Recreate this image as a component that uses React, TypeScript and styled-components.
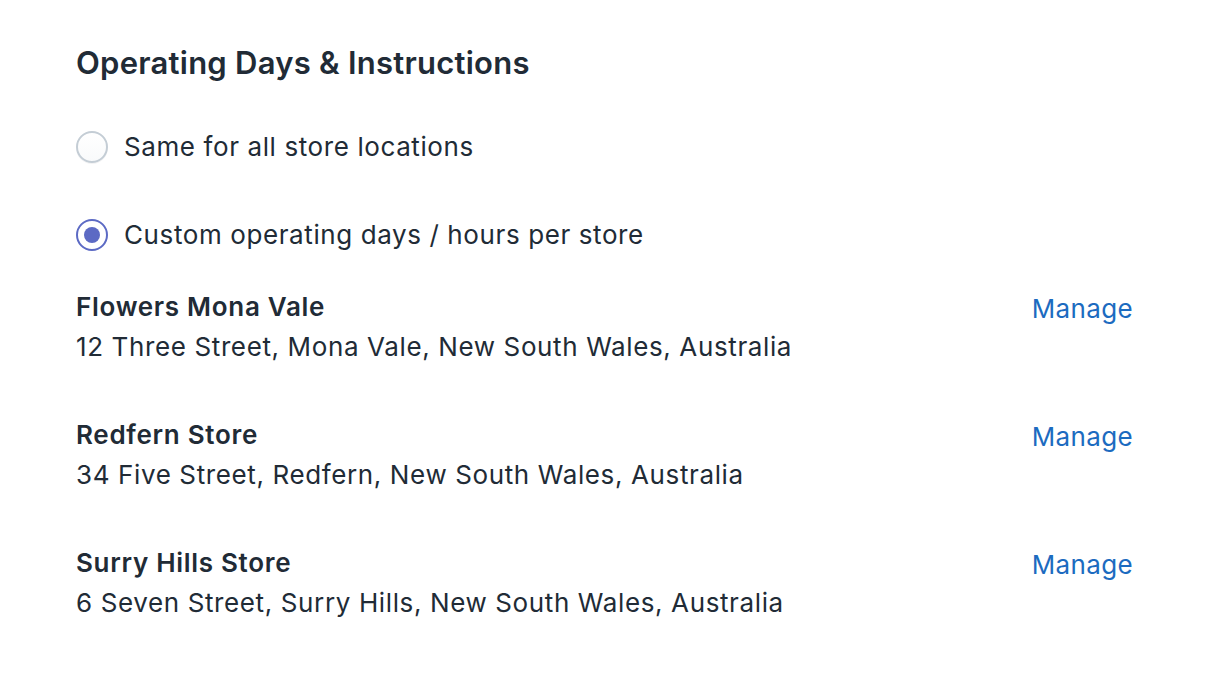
import { styled, createGlobalStyle } from 'styled-components';
import { useState } from 'react';

const GlobalStyle = createGlobalStyle`
  html, body {
    margin: 0;
    padding: 0;
    background: #ffffff;
  }
  body {
    font-family: Inter, "Noto Sans", "Liberation Sans", sans-serif;
    color: #212b36;
    -webkit-font-smoothing: antialiased;
  }
`;

const stores = [
  { name: 'Flowers Mona Vale', address: '12 Three Street, Mona Vale, New South Wales, Australia' },
  { name: 'Redfern Store', address: '34 Five Street, Redfern, New South Wales, Australia' },
  { name: 'Surry Hills Store', address: '6 Seven Street, Surry Hills, New South Wales, Australia' },
];

function App() {
  const [mode, setMode] = useState<'same' | 'custom'>('custom');
  return (
    <Page>
      <GlobalStyle />
      <Heading>Operating Days &amp; Instructions</Heading>
      <Options>
        <Option onClick={() => setMode('same')}>
          <Radio $checked={mode === 'same'} />
          <span>Same for all store locations</span>
        </Option>
        <Option onClick={() => setMode('custom')}>
          <Radio $checked={mode === 'custom'} />
          <span>Custom operating days / hours per store</span>
        </Option>
      </Options>
      {mode === 'custom' && (
        <StoreList>
          {stores.map((s) => (
            <StoreRow key={s.name}>
              <div>
                <StoreName>{s.name}</StoreName>
                <StoreAddress>{s.address}</StoreAddress>
              </div>
              <ManageLink href="#">Manage</ManageLink>
            </StoreRow>
          ))}
        </StoreList>
      )}
    </Page>
  );
}
export default App;

const Page = styled.div`
  padding: 45px 77px 40px 76px;
`;

const Heading = styled.h2`
  margin: 0;
  font-size: 31px;
  line-height: 36px;
  font-weight: 600;
  color: #212b36;
  letter-spacing: 0.25px;
`;

const Options = styled.div`
  display: flex;
  flex-direction: column;
  gap: 52px;
  margin-top: 48px;
`;

const Option = styled.label`
  display: flex;
  align-items: center;
  gap: 16px;
  font-size: 26px;
  line-height: 36px;
  letter-spacing: 0.6px;
  color: #212b36;
  cursor: pointer;
`;

const Radio = styled.span<{ $checked: boolean }>`
  box-sizing: border-box;
  position: relative;
  width: 32px;
  height: 32px;
  border-radius: 50%;
  flex-shrink: 0;
  border: 2px solid ${(p) => (p.$checked ? '#5c6ac4' : '#c4cdd5')};
  background: ${(p) => (p.$checked ? '#ffffff' : 'linear-gradient(180deg, #ffffff, #f9fafb)')};
  box-shadow: ${(p) => (p.$checked ? 'none' : '0 1px 0 0 rgba(22, 29, 37, 0.05)')};

  &::after {
    content: '';
    position: absolute;
    top: 50%;
    left: 50%;
    width: 16px;
    height: 16px;
    border-radius: 50%;
    background: #5c6ac4;
    transform: translate(-50%, -50%);
    display: ${(p) => (p.$checked ? 'block' : 'none')};
  }
`;

const StoreList = styled.div`
  display: flex;
  flex-direction: column;
  gap: 48px;
  margin-top: 34px;
`;

const StoreRow = styled.div`
  display: flex;
  justify-content: space-between;
  align-items: flex-start;
`;

const StoreName = styled.div`
  font-size: 26px;
  line-height: 40px;
  font-weight: 600;
  letter-spacing: 0.7px;
  color: #212b36;
`;

const StoreAddress = styled.div`
  font-size: 26px;
  line-height: 40px;
  letter-spacing: 0.62px;
  color: #212b36;
`;

const ManageLink = styled.a`
  font-size: 26px;
  line-height: 40px;
  margin-top: 2px;
  letter-spacing: 0.35px;
  color: #1c6bc0;
  text-decoration: none;
`;
